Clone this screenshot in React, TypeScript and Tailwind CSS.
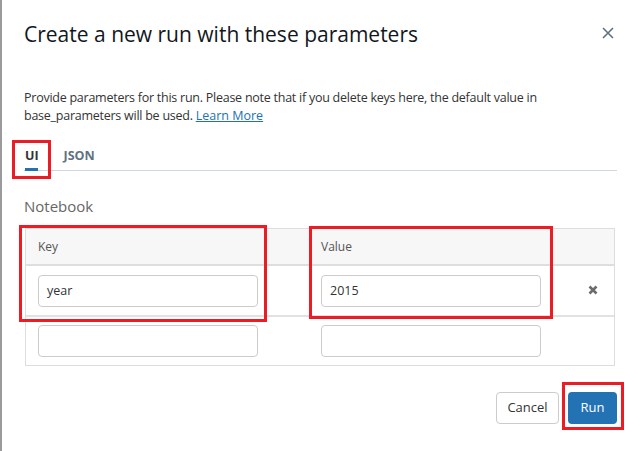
import React from "react";

const font = { fontFamily: '"Open Sans", "Noto Sans", sans-serif' };

export default function App() {
  return (
    <div className="relative w-[641px] h-[451px] bg-white overflow-hidden border-l-2 border-[#9a9a9a]" style={font}>
      <div className="flex flex-col pl-[22px] pr-[24px]">
        {/* Header */}
        <div className="flex items-start justify-between pt-[19px] h-[84px]">
          <h1 className="text-[21px] leading-[30px] text-[#11171c] font-normal">Create a new run with these parameters</h1>
          <svg width="12" height="12" viewBox="0 0 12 12" className="mt-[8px] mr-[3px]">
            <path d="M1 1L11 11M11 1L1 11" stroke="#5f7281" strokeWidth="1.6" />
          </svg>
        </div>
        {/* Description */}
        <p className="text-[12.5px] leading-[18px] tracking-[-0.25px] text-[#333] w-[540px] mt-[5px]">
          Provide parameters for this run. Please note that if you delete keys here, the default value in base_parameters will be used.{" "}
          <a className="text-[#2272b4] underline tracking-normal">Learn More</a>
        </p>
        {/* Tabs */}
        <div className="flex items-end gap-[25px] mt-[22px] border-b border-[#cfd8e0] pl-[1px]">
          <div className="relative text-[12.5px] font-bold text-[#333] pb-[4px]">
            UI
            <div className="absolute left-0 bottom-[-1px] w-[13px] h-[3px] bg-[#2272b4]" />
          </div>
          <div className="text-[12.5px] font-bold text-[#5f7281] pb-[4px]">JSON</div>
        </div>
        {/* Notebook */}
        <div className="text-[15px] text-[#666] mt-[25px] leading-[20px]">Notebook</div>
        {/* Table */}
        <div className="mt-[12px] ml-[1px] w-[590px] border border-[#ddd]">
          <div className="grid grid-cols-[283px_247px_1fr] h-[37px] bg-[#f7f7f7] border-b-2 border-[#dedede] items-center text-[12px] text-[#555]">
            <div className="pl-[12px] pt-[2px]">Key</div>
            <div className="pl-[12px] pt-[2px]">Value</div>
            <div />
          </div>
          <div className="grid grid-cols-[283px_247px_1fr] h-[51px] border-b-2 border-[#e2e2e2] items-center">
            <div className="pl-[12px] pt-[2px]">
              <div className="w-[220px] h-[32px] border border-[#ccc] rounded-[4px] flex items-center px-[8px] text-[12.5px] text-[#333]">year</div>
            </div>
            <div className="pl-[12px] pt-[2px]">
              <div className="w-[220px] h-[32px] border border-[#ccc] rounded-[4px] flex items-center px-[8px] text-[12.5px] text-[#333]">2015</div>
            </div>
            <div className="flex justify-end pr-[16px]">
              <svg width="10" height="10" viewBox="0 0 10 10">
                <path d="M1.5 1.5L8.5 8.5M8.5 1.5L1.5 8.5" stroke="#6b6b6b" strokeWidth="2.6" strokeLinecap="butt" />
              </svg>
            </div>
          </div>
          <div className="grid grid-cols-[283px_247px_1fr] h-[48px] items-center">
            <div className="pl-[12px]">
              <div className="w-[220px] h-[32px] border border-[#ccc] rounded-[4px]" />
            </div>
            <div className="pl-[12px]">
              <div className="w-[220px] h-[32px] border border-[#ccc] rounded-[4px]" />
            </div>
            <div />
          </div>
        </div>
        {/* Footer */}
        <div className="flex justify-end gap-[9px] mt-[26px] pr-[0px]">
          <button className="w-[63px] h-[32px] border border-[#ccc] rounded-[4px] text-[13px] text-[#333] bg-white">Cancel</button>
          <button className="w-[49px] h-[32px] rounded-[4px] text-[13px] text-white bg-[#2272b4]">Run</button>
        </div>
      </div>

      {/* Red annotation boxes */}
      <div className="absolute left-[10px] top-[140px] w-[39px] h-[39px] border-[3px] border-[#ed1c24]" />
      <div className="absolute left-[17px] top-[225px] w-[248px] h-[97px] border-[3px] border-[#ed1c24]" />
      <div className="absolute left-[307px] top-[226px] w-[244px] h-[93px] border-[3px] border-[#ed1c24]" />
      <div className="absolute left-[560px] top-[382px] w-[62px] h-[48px] border-[3px] border-[#ed1c24]" />
    </div>
  );
}
